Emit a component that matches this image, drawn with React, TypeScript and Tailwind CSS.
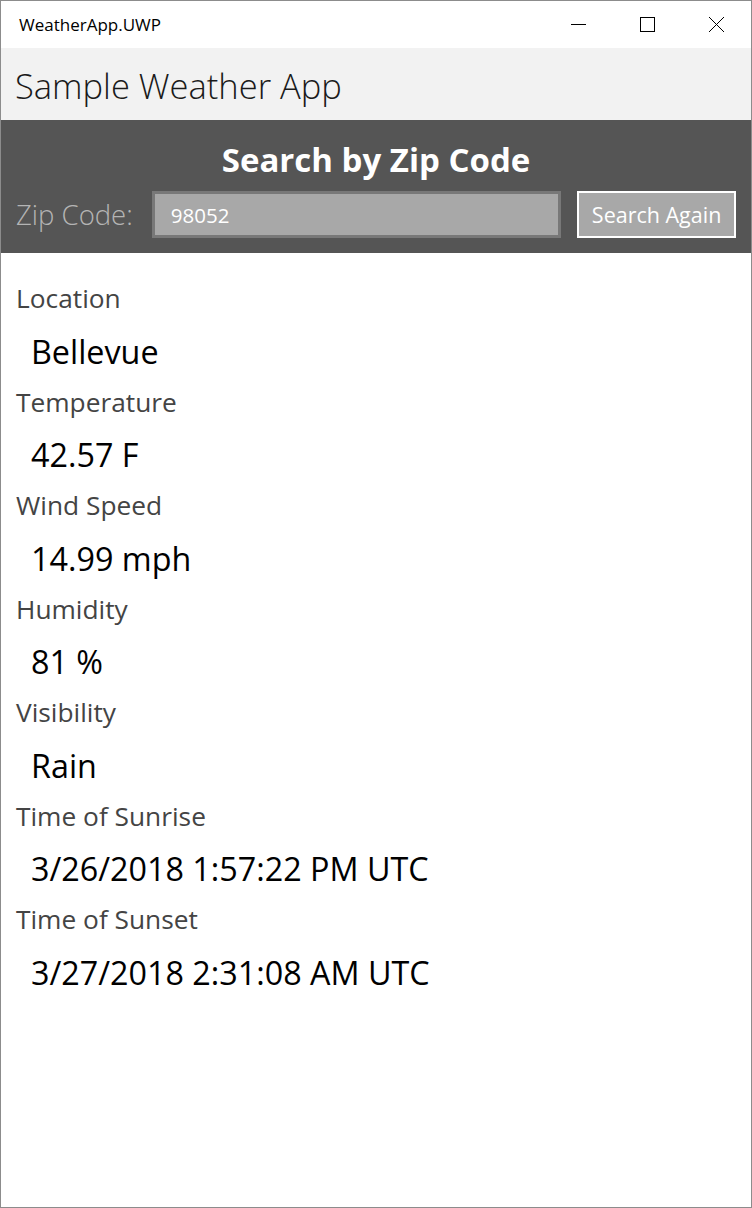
import React from "react";

const rows: [string, string][] = [
  ["Location", "Bellevue"],
  ["Temperature", "42.57 F"],
  ["Wind Speed", "14.99 mph"],
  ["Humidity", "81 %"],
  ["Visibility", "Rain"],
  ["Time of Sunrise", "3/26/2018 1:57:22 PM UTC"],
  ["Time of Sunset", "3/27/2018 2:31:08 AM UTC"],
];

export default function App() {
  return (
    <div className="w-[752px] h-[1208px] border border-[#8c8c8c] bg-white flex flex-col overflow-hidden font-['Open_Sans',_'Noto_Sans',_sans-serif]">
      {/* title bar */}
      <div className="h-[47px] flex items-center justify-between bg-white shrink-0">
        <div className="pl-[18px] text-[17px] text-black">WeatherApp.UWP</div>
        <div className="flex h-full">
          <div className="w-[69px] h-full flex items-center justify-center">
            <svg width="15" height="15" viewBox="0 0 15 15">
              <line x1="0" y1="7.5" x2="15" y2="7.5" stroke="#000" strokeWidth="1" />
            </svg>
          </div>
          <div className="w-[69px] h-full flex items-center justify-center">
            <svg width="15" height="15" viewBox="0 0 15 15">
              <rect x="0.5" y="0.5" width="14" height="14" fill="none" stroke="#000" strokeWidth="1" />
            </svg>
          </div>
          <div className="w-[69px] h-full flex items-center justify-center">
            <svg width="15" height="15" viewBox="0 0 15 15">
              <line x1="0" y1="0" x2="15" y2="15" stroke="#000" strokeWidth="1" />
              <line x1="15" y1="0" x2="0" y2="15" stroke="#000" strokeWidth="1" />
            </svg>
          </div>
        </div>
      </div>

      {/* app header */}
      <div className="h-[72px] bg-[#f2f2f2] flex items-center shrink-0">
        <div className="pl-[14px] pt-[4px] text-[34.5px] font-light text-[#1a1a1a]">Sample Weather App</div>
      </div>

      {/* search panel */}
      <div className="h-[133px] bg-[#555555] shrink-0 flex flex-col">
        <div className="h-[71px] flex items-center justify-center pt-[8px] text-[33px] font-bold text-white">
          Search by Zip Code
        </div>
        <div className="flex items-center h-[47px] pl-[15px] pr-[15px]">
          <div className="w-[136px] text-[27.5px] font-light text-[#b4b4b4]">Zip Code:</div>
          <div className="w-[410px] h-[47px] border-[3px] border-[#787878] bg-[#a8a8a8] flex items-center pl-[16px] pt-[2px] text-[20.5px] text-white">
            98052
          </div>
          <div className="ml-[16px] w-[159px] h-[47px] border-2 border-white bg-[#a8a8a8] flex items-center justify-center pt-[2px] text-[21.5px] text-white">
            Search Again
          </div>
        </div>
      </div>

      {/* content */}
      <div className="flex flex-col pt-[20px]">
        {rows.map(([label, value]) => (
          <div key={label} className="flex flex-col">
            <div className="h-[52px] flex items-center pl-[15px] text-[26.3px] text-[#444444]">{label}</div>
            <div className="h-[51.5px] flex items-center pl-[30px] text-[32.3px] text-black">{value}</div>
          </div>
        ))}
      </div>
    </div>
  );
}
